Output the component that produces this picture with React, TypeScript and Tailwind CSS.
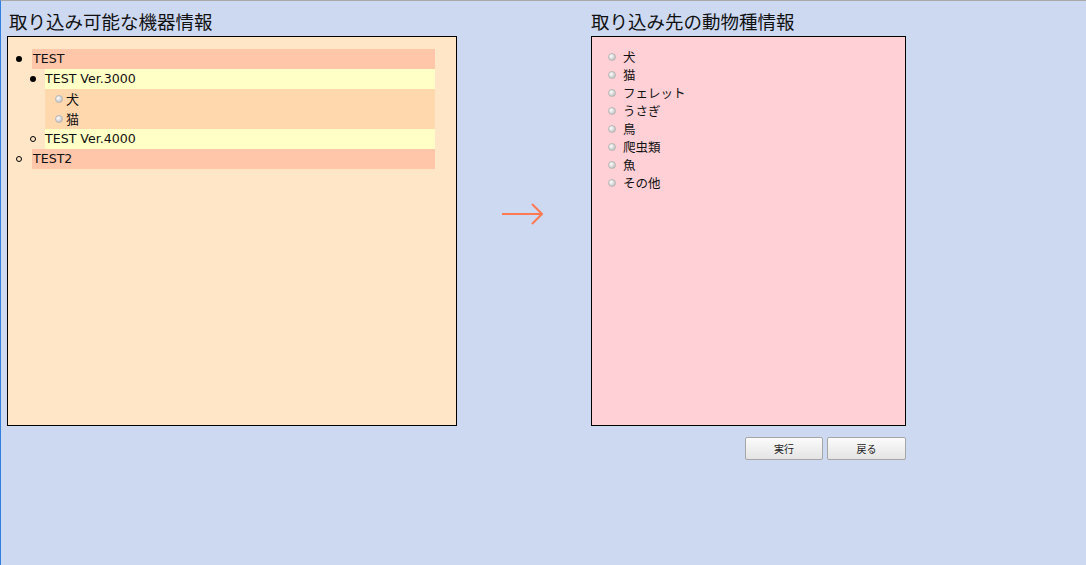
import React from "react";

const jp = { fontFamily: '"Noto Sans CJK JP", "Noto Sans", sans-serif' };
const list = { fontFamily: '"DejaVu Sans", "Noto Sans CJK JP", sans-serif' };

function Sphere() {
  return (
    <span className="inline-block w-[8px] h-[8px] rounded-full border border-[#b8b8b8] bg-[radial-gradient(circle_at_35%_35%,#ffffff,#c8c8c8_70%,#a8a8a8)]" />
  );
}

function Disc({ hollow }: { hollow?: boolean }) {
  return hollow ? (
    <span className="inline-block w-[6px] h-[6px] rounded-full border border-black" />
  ) : (
    <span className="inline-block w-[6px] h-[6px] rounded-full bg-black" />
  );
}

const animals = ["犬", "猫", "フェレット", "うさぎ", "鳥", "爬虫類", "魚", "その他"];

export default function App() {
  return (
    <div
      className="w-full h-screen bg-[#cdd9f1] border-t border-t-[#a8a8a8] border-l border-l-[#2f7fe0] text-[#111]"
      style={jp}
    >
      <div className="flex flex-row pl-[6px] pt-[8px]">
        {/* left column */}
        <div className="w-[450px] flex flex-col">
          <h2 className="h-[24px] leading-[24px] text-[18.5px] pl-[2px] mb-[3px]">取り込み可能な機器情報</h2>
          <div className="h-[390px] border border-black bg-[#ffe6c6] pt-[12px] pl-[8px] pr-[21px] text-[12.6px]" style={list}>
            <div className="flex flex-col">
              <div className="flex items-center h-[20px]">
                <div className="w-[16px] flex justify-start"><Disc /></div>
                <div className="flex-1 h-full leading-[20px] bg-[#ffc6aa] pl-[1px]">TEST</div>
              </div>
              <div className="flex items-center h-[20px] pl-[14px]">
                <div className="w-[15px] flex justify-start"><Disc /></div>
                <div className="flex-1 h-full leading-[20px] bg-[#ffffc6]">TEST Ver.3000</div>
              </div>
              <div className="ml-[29px] bg-[#ffd8ae] pl-[10px]">
                {["犬", "猫"].map((a) => (
                  <div key={a} className="flex items-center h-[20px] gap-[3px]">
                    <Sphere />
                    <span className="leading-[20px] text-[13px]" style={jp}>{a}</span>
                  </div>
                ))}
              </div>
              <div className="flex items-center h-[20px] pl-[14px]">
                <div className="w-[15px] flex justify-start"><Disc hollow /></div>
                <div className="flex-1 h-full leading-[20px] bg-[#ffffc6]">TEST Ver.4000</div>
              </div>
              <div className="flex items-center h-[20px]">
                <div className="w-[16px] flex justify-start"><Disc hollow /></div>
                <div className="flex-1 h-full leading-[20px] bg-[#ffc6aa] pl-[1px]">TEST2</div>
              </div>
            </div>
          </div>
        </div>

        {/* arrow */}
        <div className="w-[134px] flex items-start justify-center pt-[193px]">
          <svg width="42" height="24" viewBox="0 0 42 24" className="ml-[-4px]">
            <path d="M1 12 H40 M31 2 L41 12 L31 22" fill="none" stroke="#ff7a52" strokeWidth="2" />
          </svg>
        </div>

        {/* right column */}
        <div className="w-[315px] flex flex-col">
          <h2 className="h-[24px] leading-[24px] text-[18.5px] mb-[3px]">取り込み先の動物種情報</h2>
          <div className="h-[390px] border border-black bg-[#ffd0d6] pt-[11px] pl-[16px] text-[12.5px]">
            {animals.map((a) => (
              <div key={a} className="flex items-center h-[18px] gap-[7px]">
                <Sphere />
                <span className="leading-[18px]">{a}</span>
              </div>
            ))}
          </div>
          <div className="flex flex-row justify-end gap-[4px] mt-[11px]">
            <button className="w-[78px] h-[23px] text-[10px] rounded-[2px] border border-[#a6a6a6] bg-gradient-to-b from-[#fbfbfb] to-[#e4e4e4] text-[#222]">
              実行
            </button>
            <button className="w-[79px] h-[23px] text-[10px] rounded-[2px] border border-[#a6a6a6] bg-gradient-to-b from-[#fbfbfb] to-[#e4e4e4] text-[#222]">
              戻る
            </button>
          </div>
        </div>
      </div>
    </div>
  );
}
